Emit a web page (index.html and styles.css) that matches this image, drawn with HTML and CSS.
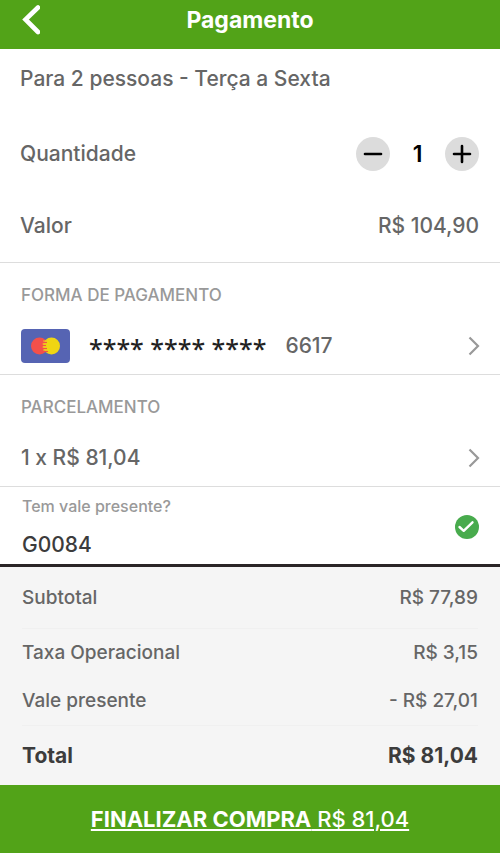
FILE: index.html
```html
<!DOCTYPE html>
<html lang="pt-BR">
<head>
<meta charset="utf-8">
<meta name="viewport" content="width=device-width, initial-scale=1">
<title>Pagamento</title>
<link rel="stylesheet" href="styles.css">
</head>
<body>
<header class="topbar">
  <button class="back" type="button" aria-label="Voltar">
    <svg width="20" height="30" viewBox="0 0 20 30" aria-hidden="true"><path d="M18 2.500 5.500 14.500 18 27" fill="none" stroke="#fff" stroke-width="4.600" stroke-linecap="round"/></svg>
  </button>
  <h1 class="heading">Pagamento</h1>
</header>
<main>
  <section class="product">
    <h2 class="product-name">Para 2 pessoas - Terça a Sexta</h2>
    <div class="row quantity">
      <span>Quantidade</span>
      <div class="stepper">
        <button class="step" type="button" aria-label="Diminuir"><svg width="34" height="34" viewBox="0 0 34 34" aria-hidden="true"><path d="M9 17h16" stroke="#000" stroke-width="2.600" stroke-linecap="round"/></svg></button>
        <output class="count">1</output>
        <button class="step" type="button" aria-label="Aumentar"><svg width="34" height="34" viewBox="0 0 34 34" aria-hidden="true"><path d="M9 17h16M17 9v16" stroke="#000" stroke-width="2.600" stroke-linecap="round"/></svg></button>
      </div>
    </div>
    <div class="row price"><span>Valor</span><span>R$ 104,90</span></div>
  </section>
  <section class="option">
    <h2 class="caption">FORMA DE PAGAMENTO</h2>
    <button class="row choice" type="button">
      <span class="card">
        <svg width="49" height="34" viewBox="0 0 49 34" aria-hidden="true">
          <rect width="49" height="34" rx="4" fill="#5664b3"/>
          <circle cx="18.500" cy="17" r="8.500" fill="#f4504a"/>
          <circle cx="30.500" cy="17" r="8.500" fill="#f0d512"/>
          <path d="M22 13.500h4M22 16.500h3M22 19.500h4M23 22.500h4" stroke="#f4504a" stroke-width="1.200"/>
          <path d="M22 12h4M21.500 15h4M21.500 18h4M22 21h4" stroke="#f0b52a" stroke-width="1.200"/>
        </svg>
        <span class="mask">**** **** ****</span>
        <span>6617</span>
      </span>
      <svg width="12" height="20" viewBox="0 0 12 20" aria-hidden="true"><path d="M1.500 1.500 10 10 1.500 18.500" fill="none" stroke="#999" stroke-width="2.200"/></svg>
    </button>
  </section>
  <section class="option">
    <h2 class="caption">PARCELAMENTO</h2>
    <button class="row choice" type="button">
      <span>1 x R$ 81,04</span>
      <svg width="12" height="20" viewBox="0 0 12 20" aria-hidden="true"><path d="M1.500 1.500 10 10 1.500 18.500" fill="none" stroke="#999" stroke-width="2.200"/></svg>
    </button>
  </section>
  <section class="voucher">
    <div class="field">
      <label class="field-label" for="voucher">Tem vale presente?</label>
      <input class="field-input" id="voucher" type="text" value="G0084">
    </div>
    <svg width="24" height="24" viewBox="0 0 24 24" role="img" aria-label="Vale aplicado"><circle cx="12" cy="12" r="12" fill="#48ab4d"/><path d="M4.500 12 8.700 15.800 17.500 7.300" fill="none" stroke="#fff" stroke-width="2.400" stroke-linecap="round" stroke-linejoin="round"/></svg>
  </section>
  <dl class="summary">
    <div class="row line subtotal"><dt>Subtotal</dt><dd>R$ 77,89</dd></div>
    <div class="row line"><dt>Taxa Operacional</dt><dd>R$ 3,15</dd></div>
    <div class="row line"><dt>Vale presente</dt><dd>- R$ 27,01</dd></div>
    <div class="row line total"><dt>Total</dt><dd>R$ 81,04</dd></div>
  </dl>
</main>
<footer>
  <button class="checkout" type="button"><strong>FINALIZAR COMPRA</strong> R$ 81,04</button>
</footer>
</body>
</html>
```
FILE: styles.css
```css
* {
  box-sizing: border-box;
}

body {
  margin: 0;
  background: #fff;
  color: #666;
  font: 500 21px/24px Inter, "Liberation Sans", sans-serif;
}

button {
  padding: 0;
  border: 0;
  background: none;
  color: inherit;
  font: inherit;
}

svg {
  display: block;
  flex: none;
}

h1,
h2,
dl,
dd {
  margin: 0;
  font: inherit;
}

.topbar {
  display: grid;
  grid-template-columns: 20px 1fr 20px;
  align-items: center;
  padding: 5px 20px 14px;
  background: #52a318;
  color: #fff;
}

.heading {
  font-size: 23px;
  font-weight: 700;
  text-align: center;
}

.row {
  display: flex;
  align-items: center;
  justify-content: space-between;
}

.product {
  padding: 18px 21px 24px 20px;
  border-bottom: 1px solid #ddd;
}

.quantity {
  padding: 46px 0 43px;
}

.stepper {
  display: flex;
  align-items: center;
}

.step {
  border-radius: 50%;
  background: #dcdcdc;
}

.count {
  width: 55px;
  color: #000;
  font-size: 23px;
  font-weight: 600;
  text-align: center;
}

.option {
  padding: 22px 20px 11px 21px;
  border-bottom: 1px solid #ddd;
}

.caption {
  color: #999;
  font-size: 17px;
  line-height: 20px;
}

.choice {
  width: 100%;
  min-height: 34px;
  margin-top: 24px;
}

.card {
  display: flex;
  align-items: center;
  gap: 19px;
}

.mask {
  padding-top: 4px;
  color: #222;
  font-family: "Noto Sans", sans-serif;
  font-size: 25px;
}

.voucher {
  display: flex;
  align-items: center;
  justify-content: space-between;
  padding: 9px 21px 7px 22px;
  border-bottom: 3px solid #2a2526;
}

.field {
  flex: 1;
}

.field-label {
  display: block;
  color: #999;
  font-size: 16px;
  line-height: 20px;
}

.field-input {
  display: block;
  width: 100%;
  margin-top: 17px;
  padding: 0;
  border: 0;
  outline: 0;
  background: none;
  color: #3c3c3c;
  font: inherit;
}

.summary {
  padding: 0 22px;
  background: #f5f5f5;
  font-size: 19px;
}

.line {
  min-height: 48px;
}

.subtotal {
  min-height: 62px;
  border-bottom: 1px solid #f0f0f0;
}

.total {
  min-height: 60px;
  border-top: 1px solid #f0f0f0;
  color: #3c3c3c;
  font-size: 21px;
  font-weight: 700;
}

.checkout {
  display: block;
  width: 100%;
  padding: 22px 0;
  background: #52a318;
  color: #fff;
  font-size: 22px;
  text-decoration: underline;
}

.checkout strong {
  font-weight: 700;
}
```
